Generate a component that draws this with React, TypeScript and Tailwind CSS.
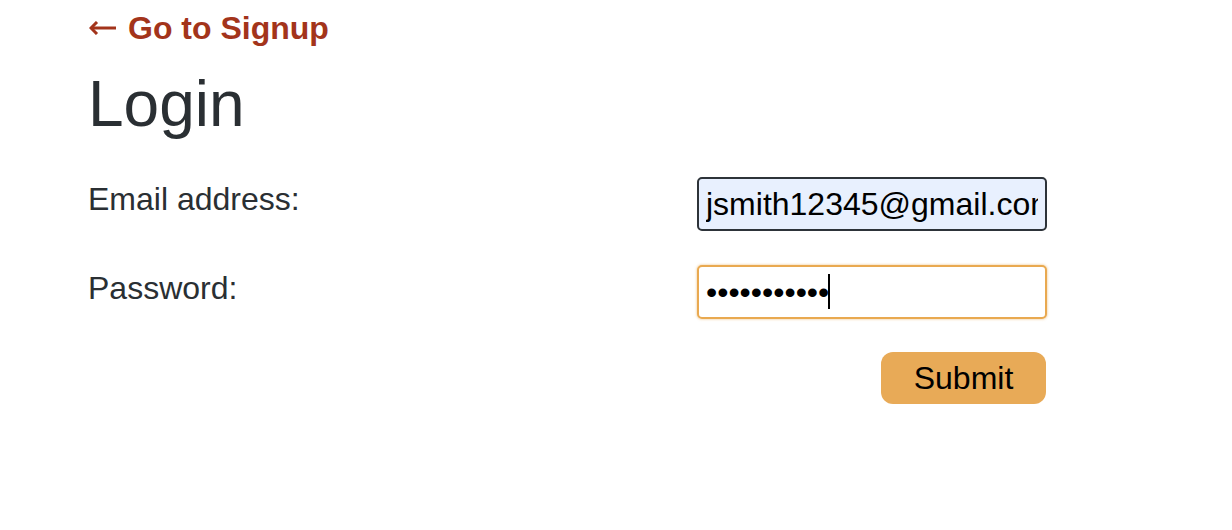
import React, { useState } from "react";

export default function App() {
    const [email, setEmail] = useState("jsmith12345@gmail.com");
    const [password, setPassword] = useState("secretpass1");

    return (
        <div className="min-h-[530px] bg-white font-['Liberation_Sans',Arial,sans-serif] text-[#2a2f33]">
            <div className="w-[959px] ml-[88px] pt-[10px]">
                <a
                    href="#"
                    className="flex items-center gap-[11px] text-[32px] leading-[37px] font-bold text-[#a3341b] no-underline"
                >
                    {/* left arrow */}
                    <svg
                        width="28"
                        height="14"
                        viewBox="0 0 28 14"
                        className="mt-[-2px] ml-[1px]"
                        fill="none"
                        stroke="currentColor"
                        strokeWidth="3"
                        strokeLinecap="butt"
                    >
                        <path d="M2 7 H27" />
                        <path d="M8 1 L2 7 L8 13" strokeLinejoin="miter" />
                    </svg>
                    <span>Go to Signup</span>
                </a>
                <h1 className="mt-[25px] text-[64px] leading-[64px] font-normal">
                    Login
                </h1>
                <form
                    className="mt-[41px] flex flex-col"
                    onSubmit={(e) => e.preventDefault()}
                >
                    <div className="flex justify-between items-start">
                        <label className="mt-[6px] text-[32px] leading-[32px]">
                            Email address:
                        </label>
                        <input
                            type="email"
                            value={email}
                            onChange={(e) => setEmail(e.target.value)}
                            className="w-[350px] h-[54px] px-[7px] rounded-[5px] border-2 border-[#2d3339] bg-[#e8f0fe] text-[32px] text-black outline-none"
                        />
                    </div>
                    <div className="mt-[34px] flex justify-between items-start">
                        <label className="mt-[7px] text-[32px] leading-[32px]">
                            Password:
                        </label>
                        <div className="relative">
                            <input
                                type="password"
                                value={password}
                                onChange={(e) => setPassword(e.target.value)}
                                className="w-[350px] h-[54px] px-[7px] rounded-[5px] border-2 border-[#e9a950] bg-white text-[32px] text-black outline-none shadow-[0_0_2px_1px_rgba(233,169,80,0.35)]"
                            />
                            <span className="absolute left-[131px] top-[9px] w-[2px] h-[35px] bg-black" />
                        </div>
                    </div>
                    <div className="mt-[33px] flex justify-end">
                        <button
                            type="submit"
                            className="w-[165px] h-[52px] mr-[1px] rounded-[12px] bg-[#e8aa57] text-[32px] leading-[32px] text-black"
                        >
                            Submit
                        </button>
                    </div>
                </form>
            </div>
        </div>
    );
}
